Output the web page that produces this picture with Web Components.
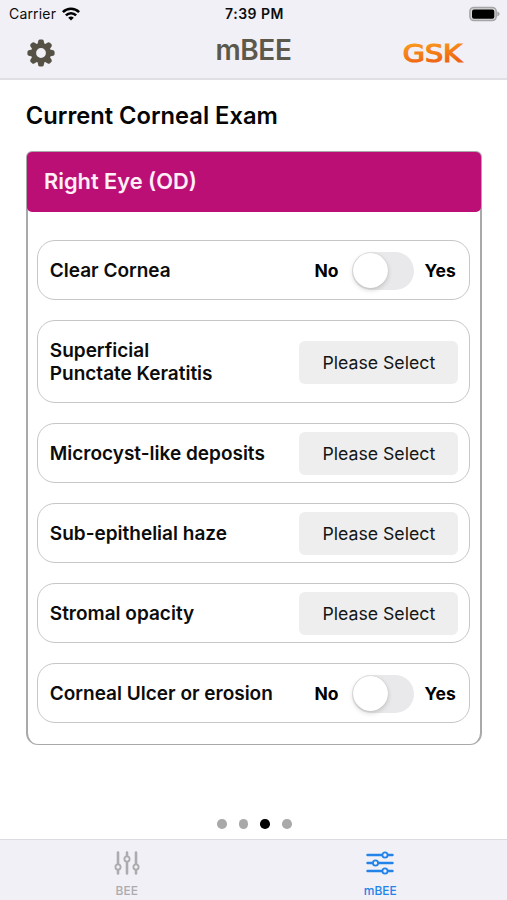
<!DOCTYPE html>
<html lang="en">
<head>
<meta charset="utf-8">
<title>mBEE</title>
<style>
html,body{margin:0;height:100%;background:#fff}
body{font-family:Inter,"Liberation Sans",sans-serif;color:#0c0c0c;overflow:hidden}
</style>
</head>
<body>
<mbee-app></mbee-app>
<script>
const define = (name, html) => customElements.define(name, class extends HTMLElement {
  constructor() {
    super();
    this.attachShadow({ mode: "open" }).innerHTML = typeof html === "function" ? html(this) : html;
  }
});

define("status-bar", `
<style>
:host{display:grid;grid-template-columns:1fr auto 1fr;align-items:center;height:27px;padding:0 7px 0 9px;font-size:14px;line-height:27px}
.l{display:flex;align-items:center;gap:6px}
.l span{letter-spacing:.18px}
.t{font-weight:600;letter-spacing:.48px}
.b{justify-self:end;display:block}
</style>
<div class="l"><span>Carrier</span>
<svg width="18" height="14" viewBox="0 0 18 14" fill="none" stroke="#000" stroke-width="2.6"><path d="M.9 5.1a11.6 11.6 0 0 1 16.2 0"/><path d="M3.9 8.4a7.2 7.2 0 0 1 10.2 0"/><path d="M9 13.6 6.2 10.8a4 4 0 0 1 5.6 0z" fill="#000" stroke="none"/></svg></div>
<span class="t">7:39 PM</span>
<svg class="b" width="31" height="16" viewBox="0 0 31 16"><rect x=".9" y="1.4" width="26.3" height="13.2" rx="4" fill="#d6d6d8" stroke="#a5a5a7" stroke-width="1.5"/><rect x="3" y="3.4" width="22.3" height="9.4" rx="2" fill="#000"/><path d="M28.3 5.6c3 1 3 3.8 0 4.8z" fill="#a5a5a7"/></svg>`);

define("gear-icon", `
<style>:host{display:block}svg{display:block}</style>
<svg width="28" height="28" viewBox="-14 -14 28 28" fill="#565145">
<path fill-rule="evenodd" d="M0-10a10 10 0 1 0 0 20a10 10 0 1 0 0-20zM0-4.9a4.9 4.9 0 1 1 0 9.8a4.9 4.9 0 1 1 0-9.8z"/>
<g id="a"><path id="t" d="M-3.5-8.8-2.7-12.3Q-2.3-13.6-1-13.6H1Q2.3-13.6 2.7-12.3L3.5-8.8z"/>
<use href="#t" transform="rotate(45)"/><use href="#t" transform="rotate(90)"/><use href="#t" transform="rotate(135)"/></g>
<use href="#a" transform="rotate(180)"/></svg>`);

define("gsk-logo", `
<style>:host{display:block}svg{display:block}text{font:24px "DejaVu Sans",sans-serif}</style>
<svg width="66" height="30" viewBox="-2 -4 66 30"><defs><linearGradient id="g" x1="0" y1="0" x2=".25" y2="1"><stop offset=".15" stop-color="#f99a1c"/><stop offset=".9" stop-color="#ee6413"/></linearGradient></defs>
<text x=".8" y="19.6" textLength="59" lengthAdjust="spacingAndGlyphs" fill="url(#g)" stroke="url(#g)" stroke-width="1.2">GSK</text></svg>`);

define("nav-header", `
<style>
:host{display:block;box-sizing:border-box;height:80px;background:#f1f0f6;border-bottom:2px solid #e0e0e4}
.bar{display:grid;grid-template-columns:1fr auto 1fr;align-items:center;height:47px;padding:0 41px 0 27px}
.title{font-size:28px;font-weight:600;color:#5c584b;line-height:47px;letter-spacing:-.4px;padding-left:14px}
gsk-logo{justify-self:end;margin-top:5px}
gear-icon{margin-top:4px}
</style>
<status-bar></status-bar>
<div class="bar"><gear-icon></gear-icon><span class="title">mBEE</span><gsk-logo></gsk-logo></div>`);

define("exam-card", `
<style>
:host{display:block;box-sizing:border-box;width:456.5px;height:594px;border:solid #a9a9ab;border-width:1px 2px 1.5px;border-radius:6px 6px 12px 12px;background:#fff}
.head{box-sizing:border-box;height:59.5px;margin:0 -1px;background:#bb0f76;border-radius:5px;color:#fff0f8;font-size:21.8px;font-weight:600;line-height:59px;padding-left:17.2px}
.body{display:flex;flex-direction:column;gap:20px;padding:28px 10px 0 9.6px}
</style>
<div class="head"><slot name="title"></slot></div>
<div class="body"><slot></slot></div>`);

define("exam-row", `
<style>
:host{display:flex;box-sizing:border-box;height:60px;align-items:center;justify-content:space-between;border:1.5px solid #c6c6c8;border-radius:18px;padding:2px 11px 0 11.4px}
:host([tall]){height:83px}
.label{font-size:19px;font-weight:600;line-height:23px;white-space:pre-line}
</style>
<span class="label"><slot></slot></span><slot name="control"></slot>`);

define("yes-no", `
<style>
:host{display:flex;align-items:center;color:#000;font-size:17.5px;font-weight:700;line-height:23px}
.sw{box-sizing:border-box;width:62px;height:38px;border-radius:19px;background:#e9e9eb;margin:0 11px 0 13px;padding:1.5px}
.k{width:35px;height:35px;border-radius:50%;background:#fff;box-shadow:0 2px 5px rgba(0,0,0,.17),0 0 1px rgba(0,0,0,.2)}
.y{padding-right:2.6px}
</style>
<span>No</span><div class="sw"><div class="k"></div></div><span class="y">Yes</span>`);

define("select-button", `
<style>:host{display:block;width:159px;height:43px;border-radius:6px;background:#eee;text-align:center;font-size:17.7px;line-height:43px;color:#151515}</style>
<slot></slot>`);

define("page-dots", `
<style>:host{display:flex;gap:12px;justify-content:center}i{width:9.6px;height:9.6px;border-radius:50%;background:#a9a9a9}.on{background:#000}</style>
<i></i><i></i><i class="on"></i><i></i>`);

const sliders = `<g stroke-width="2.4"><path d="M2.5 5H27.5M2.5 13H27.5M2.5 21H27.5"/></g><g stroke-width="1.8" fill="#f1f0f6"><circle cx="20" cy="5" r="2.6"/><circle cx="10.5" cy="13" r="2.6"/><circle cx="20" cy="21" r="2.6"/></g>`;
const faders = `<g stroke-width="2.6"><path d="M6 2.5V23.5M15 2.5V23.5M24 2.5V23.5"/></g><g stroke-width="1.8" fill="#f1f0f6"><circle cx="6" cy="17" r="2.6"/><circle cx="15" cy="9" r="2.6"/><circle cx="24" cy="17" r="2.6"/></g>`;

define("tab-item", el => `
<style>
:host{display:flex;flex-direction:column;align-items:center;color:#acacae;font-size:12px;line-height:14px;font-weight:500}
:host([active]){color:#2383e8}
svg{display:block;margin:10px 0 8px}
</style>
<svg width="30" height="26" viewBox="0 0 30 26" stroke="currentColor" stroke-linecap="round" fill="none">${el.getAttribute("icon") === "sliders" ? sliders : faders}</svg>
<slot></slot>`);

define("tab-bar", `
<style>:host{display:grid;grid-template-columns:1fr 1fr;box-sizing:border-box;height:61px;background:#f1f0f6;border-top:1.5px solid #dcdce0}</style>
<slot></slot>`);

define("mbee-app", `
<style>
:host{display:flex;flex-direction:column;width:507px;height:900px;background:#fff}
main{flex:1;display:flex;flex-direction:column;padding:0 0 10px 25.8px}
h1{margin:20px 0 19px;font-size:23.7px;line-height:32px;font-weight:600;color:#050505}
page-dots{margin:auto 0 0 -24px}
</style>
<nav-header></nav-header>
<main>
<h1>Current Corneal Exam</h1>
<exam-card><span slot="title">Right Eye (OD)</span>
<exam-row>Clear Cornea<yes-no slot="control"></yes-no></exam-row>
<exam-row tall>Superficial
Punctate Keratitis<select-button slot="control">Please Select</select-button></exam-row>
<exam-row>Microcyst-like deposits<select-button slot="control">Please Select</select-button></exam-row>
<exam-row>Sub-epithelial haze<select-button slot="control">Please Select</select-button></exam-row>
<exam-row>Stromal opacity<select-button slot="control">Please Select</select-button></exam-row>
<exam-row>Corneal Ulcer or erosion<yes-no slot="control"></yes-no></exam-row>
</exam-card>
<page-dots></page-dots>
</main>
<tab-bar><tab-item icon="faders">BEE</tab-item><tab-item icon="sliders" active>mBEE</tab-item></tab-bar>`);
</script>
</body>
</html>
